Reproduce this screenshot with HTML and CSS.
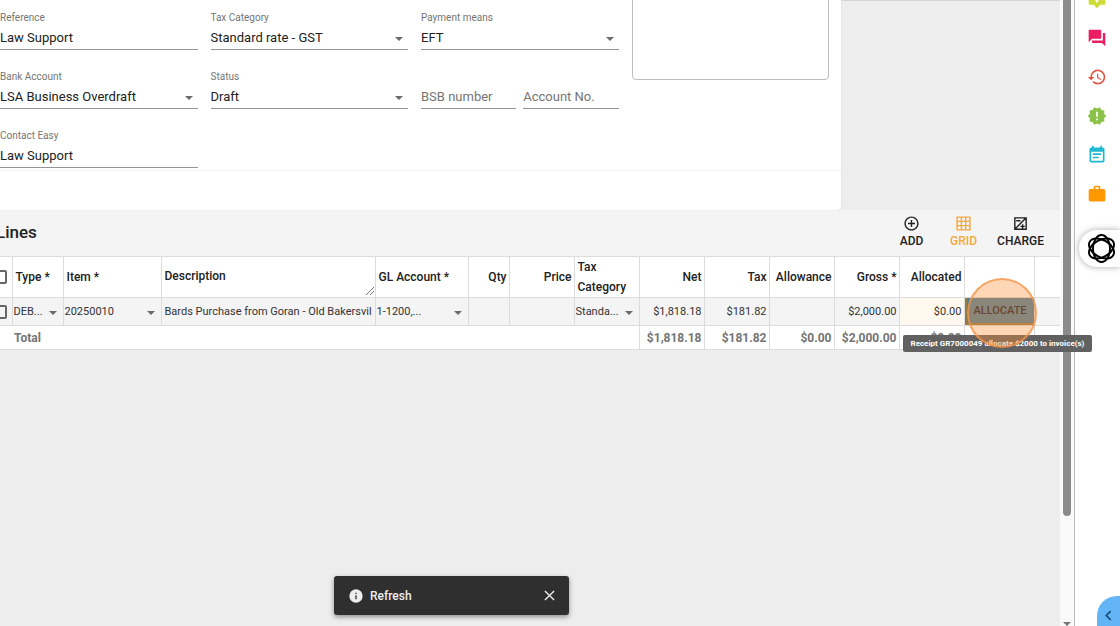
FILE: index.html
```html
<!DOCTYPE html>
<html lang="en">
<head>
<meta charset="utf-8">
<title>Purchase lines</title>
<link rel="stylesheet" href="styles.css">
</head>
<body>
<div class="app">
  <main class="main">
    <div class="top">
      <form class="card">
        <div class="fields">
          <div class="field"><label for="ref">Reference</label><input id="ref" value="Law Support"></div>
          <div class="field"><label for="taxcat">Tax Category</label><div class="pick"><select id="taxcat"><option>Standard rate - GST</option></select></div></div>
          <div class="field"><label for="pay">Payment means</label><div class="pick"><select id="pay"><option>EFT</option></select></div></div>
          <textarea class="notes" aria-label="Notes"></textarea>
          <div class="field"><label for="bank">Bank Account</label><div class="pick"><select id="bank"><option>LSA Business Overdraft</option></select></div></div>
          <div class="field"><label for="status">Status</label><div class="pick"><select id="status"><option>Draft</option></select></div></div>
          <div class="pair">
            <div class="field"><input aria-label="BSB number" placeholder="BSB number"></div>
            <div class="field"><input aria-label="Account No." placeholder="Account No."></div>
          </div>
          <div class="field"><label for="contact">Contact Easy</label><input id="contact" value="Law Support"></div>
        </div>
        <div class="card-foot"></div>
      </form>
      <div class="aside"></div>
    </div>

    <header class="lines-head">
      <h2>Lines</h2>
      <div class="tools">
        <button type="button" class="tool"><svg viewBox="0 0 24 24"><path d="M13 7h-2v4H7v2h4v4h2v-4h4v-2h-4V7zm-1-5C6.480 2 2 6.480 2 12s4.480 10 10 10 10-4.480 10-10S17.520 2 12 2zm0 18c-4.410 0-8-3.590-8-8s3.590-8 8-8 8 3.590 8 8-3.590 8-8 8z"/></svg>ADD</button>
        <button type="button" class="tool active"><svg viewBox="0 0 24 24"><path fill="none" stroke="currentColor" stroke-width="2" d="M3 3h18v18H3zM9 3v18M15 3v18M3 9h18M3 15h18"/></svg>GRID</button>
        <button type="button" class="tool"><svg viewBox="0 0 24 24"><path fill="none" stroke="currentColor" stroke-width="2" d="M4 4h16v16H4zM4 20L20 4M6 8h6M12 16h6M15 13v6"/></svg>CHARGE</button>
      </div>
    </header>

    <table class="grid">
      <colgroup><col class="c-check"><col class="c-type"><col class="c-item"><col class="c-desc"><col class="c-gl"><col class="c-qty"><col class="c-num"><col class="c-num"><col class="c-num"><col class="c-num"><col class="c-num"><col class="c-num"><col class="c-num"><col class="c-act"><col class="c-end"></colgroup>
      <thead>
        <tr>
          <th class="pickrow"><div class="check"><input type="checkbox" aria-label="Select all lines"></div></th>
          <th>Type *</th><th>Item *</th>
          <th><div class="resizable">Description<svg class="grip" viewBox="0 0 8 8"><path d="M0 8L8 0M4 8L8 4"/></svg></div></th>
          <th>GL Account *</th><th class="num">Qty</th><th class="num">Price</th><th class="two">Tax Category</th>
          <th class="num">Net</th><th class="num">Tax</th><th class="num">Allowance</th><th class="num">Gross *</th><th class="num">Allocated</th><th></th><th></th>
        </tr>
      </thead>
      <tbody>
        <tr>
          <td class="pickrow"><div class="check"><input type="checkbox" aria-label="Select line"></div></td>
          <td><div class="pick"><select aria-label="Type"><option>DEB...</option></select></div></td>
          <td><div class="pick"><select aria-label="Item"><option>20250010</option></select></div></td>
          <td class="text"><input class="desc" aria-label="Description" value="Bards Purchase from Goran - Old Bakersville"></td>
          <td><div class="pick"><select aria-label="GL Account"><option>1-1200,...</option></select></div></td>
          <td></td><td></td>
          <td><div class="pick"><select aria-label="Tax Category"><option>Standa...</option></select></div></td>
          <td class="num">$1,818.18</td><td class="num">$181.82</td><td></td><td class="num">$2,000.00</td><td class="num warm">$0.00</td>
          <td class="action"><button type="button" class="allocate">ALLOCATE</button><span class="tip" role="tooltip">Receipt GR7000049 allocate $2000 to invoice(s)</span><span class="halo"></span></td>
          <td></td>
        </tr>
      </tbody>
      <tfoot>
        <tr>
          <td></td><td class="total" colspan="7">Total</td>
          <td class="num">$1,818.18</td><td class="num">$181.82</td><td class="num">$0.00</td><td class="num">$2,000.00</td><td class="num">$0.00</td><td></td><td></td>
        </tr>
      </tfoot>
    </table>
  </main>

  <div class="scroll"><div class="thumb"></div><div class="down"></div></div>

  <nav class="rail">
    <button type="button" class="lime" aria-label="Announcements"><svg viewBox="0 0 24 24"><path d="M20 2H4c-1.100 0-2 .9-2 2v13c0 1.100.9 2 2 2h4l4 4 4-4h4c1.100 0 2-.9 2-2V4c0-1.100-.9-2-2-2zM12 17l-3-5h6z" fill-rule="evenodd"/></svg></button>
    <button type="button" class="pink" aria-label="Messages"><svg viewBox="0 0 24 24"><path d="M21 6h-2v9H6v2c0 .55.45 1 1 1h11l4 4V7c0-.55-.45-1-1-1zm-4 6V3c0-.55-.45-1-1-1H3c-.55 0-1 .45-1 1v14l4-4h10c.55 0 1-.45 1-1z"/></svg></button>
    <button type="button" class="red" aria-label="History"><svg viewBox="0 0 24 24"><path d="M13 3a9 9 0 0 0-9 9H1l3.890 3.890.07.14L9 12H6c0-3.870 3.130-7 7-7s7 3.130 7 7-3.130 7-7 7c-1.930 0-3.680-.79-4.940-2.060l-1.420 1.420A8.954 8.954 0 0 0 13 21a9 9 0 0 0 0-18zm-1 5v5l4.280 2.540.72-1.210-3.500-2.080V8H12z"/></svg></button>
    <button type="button" class="green" aria-label="Alerts"><svg viewBox="0 0 24 24"><path d="M23 12l-2.440-2.780.34-3.680-3.610-.82-1.890-3.180L12 3 8.600 1.540 6.710 4.720l-3.610.81.34 3.680L1 12l2.440 2.780-.34 3.690 3.610.82 1.890 3.180L12 21l3.400 1.460 1.890-3.180 3.610-.82-.34-3.680L23 12zm-10 5h-2v-2h2v2zm0-4h-2V7h2v6z"/></svg></button>
    <button type="button" class="cyan" aria-label="Notes"><svg viewBox="0 0 24 24"><path d="M17 10H7v2h10v-2zm2-7h-1V1h-2v2H8V1H6v2H5c-1.110 0-2 .9-2 2v14a2 2 0 0 0 2 2h14c1.100 0 2-.9 2-2V5c0-1.100-.9-2-2-2zm0 16H5V8h14v11zm-5-5H7v2h7v-2z"/></svg></button>
    <button type="button" class="orange" aria-label="Matters"><svg viewBox="0 0 24 24"><path fill-rule="evenodd" d="M20 6h-4V4c0-1.110-.89-2-2-2h-4c-1.110 0-2 .89-2 2v2H4c-1.110 0-2 .89-2 2v11c0 1.110.89 2 2 2h16c1.110 0 2-.89 2-2V8c0-1.110-.89-2-2-2zm-6 0h-4V4h4v2z"/></svg></button>
  </nav>
</div>

<button type="button" class="assistant" aria-label="Assistant"><svg viewBox="0 0 32 32"><g fill="none" stroke="#000" stroke-width="2"><ellipse cx="16" cy="16" rx="14" ry="8.800" transform="rotate(30 16 16)"/><ellipse cx="16" cy="16" rx="14" ry="8.800" transform="rotate(90 16 16)"/><ellipse cx="16" cy="16" rx="14" ry="8.800" transform="rotate(150 16 16)"/></g></svg></button>
<button type="button" class="expand" aria-label="Expand"><svg viewBox="0 0 10 10"><path d="M7 1L3 5l4 4"/></svg></button>
<div class="toast" role="status">
  <svg class="info" viewBox="0 0 24 24"><path d="M12 2a10 10 0 1 0 0 20 10 10 0 0 0 0-20zm1 15h-2v-6h2v6zm0-8h-2V7h2v2z"/></svg>
  <span>Refresh</span>
  <button type="button" aria-label="Close"><svg viewBox="0 0 12 12"><path d="M1 1l10 10M11 1L1 11"/></svg></button>
</div>
</body>
</html>
```
FILE: styles.css
```css
* { box-sizing: border-box; }
body { margin: 0; font-family: Roboto, "Liberation Sans", sans-serif; color: #212121; background: #ededed; }
button, input, select, textarea { font: inherit; color: inherit; margin: 0; padding: 0; border: 0; background: none; border-radius: 0; outline: 0; }
svg { display: block; fill: currentColor; }

.app { display: flex; height: 100vh; overflow: hidden; }
.main { flex: 1; min-width: 0; }

.top { display: flex; }
.card { flex: 1; background: #fff; border-radius: 0 0 4px 0; box-shadow: 0 0 1px #bbb; }
.aside { width: 219px; border-top: 1px solid #d4d4d4; }
.fields { display: grid; grid-template-columns: repeat(4, 1fr); column-gap: 13px; grid-auto-rows: 59px; padding-right: 12px; height: 170px; overflow: hidden; align-content: end; }
.field { display: flex; flex-direction: column; justify-content: flex-end; min-width: 0; padding-bottom: 2px; }
.field label { font-size: 10px; line-height: 14px; color: #757575; }
.field input, .field select { width: 100%; height: 25px; font-size: 13px; border-bottom: 1px solid #949494; }
.field input::placeholder { color: #757575; opacity: 1; }
.pair { display: grid; grid-template-columns: 1fr 1fr; gap: 7px; }
.notes { grid-row: span 2; height: 87px; border: 1px solid #bdbdbd; border-radius: 4px; resize: none; }
.card-foot { height: 40px; border-top: 1px solid #f3f3f3; }

.pick { position: relative; }
.pick select { appearance: none; width: 100%; display: block; }
.pick::after { content: ""; position: absolute; right: 5px; top: 50%; border: 4px solid transparent; border-top-color: #6b6b6b; border-bottom: 0; margin-top: -1px; pointer-events: none; }

.lines-head { display: flex; align-items: center; justify-content: space-between; height: 46px; background: #f4f4f4; padding: 0 16px 2px 0; }
.lines-head h2 { margin: 0 0 0 -4px; font-size: 17px; font-weight: 500; }
.tools { display: flex; gap: 15px; }
.tool { display: flex; flex-direction: column; align-items: center; gap: 1px; min-width: 37px; font-size: 12px; line-height: 16px; font-weight: 500; }
.tool svg { width: 17px; height: 17px; }
.tool.active { color: #f3a83c; }

.grid { width: 100%; table-layout: fixed; border-collapse: collapse; font-size: 12px; background: #fff; }
.c-check { width: 12px; } .c-type { width: 51px; } .c-item { width: 98px; } .c-gl { width: 93px; } .c-qty { width: 41px; }
.c-num { width: 65px; } .c-act { width: 70px; } .c-end { width: 26px; }
.grid th, .grid td { padding: 0 2px; border: 1px solid #dcdcdc; border-left: 0; text-align: left; white-space: nowrap; }
.grid th { height: 40px; font-weight: 500; padding: 0 2px 0 3px; }
.grid th.two { white-space: normal; line-height: 20px; }
.grid .num { text-align: right; }
.grid tbody td { height: 28px; background: #f4f4f4; padding: 0 1px; color: #333; font-size: 11px; }
.grid tbody td.num { padding-right: 2px; }
.grid tbody td.text { padding: 0 3px; }
.grid tbody td.warm { background: #fff8ee; }
.grid td:last-child, .grid th:last-child { border-right: 0; }
.grid th.pickrow, .grid tbody td.pickrow { padding: 0; }
.grid select { height: 25px; }
.grid .desc { display: block; width: 100%; height: 26px; }
.grid tfoot td { height: 24px; font-weight: 700; color: #757575; }
.grid tfoot td:first-child { border-right: 0; }
.check { display: flex; justify-content: flex-end; overflow: hidden; }
.check input { appearance: none; flex: none; width: 14px; height: 14px; border: 2px solid #666; border-radius: 2px; margin-right: 5px; }
.resizable { position: relative; height: 38px; line-height: 36px; }
.grip { position: absolute; right: -1px; bottom: 1px; width: 8px; height: 8px; stroke: #777; fill: none; }

.grid tbody td.action { position: relative; padding: 0; }
.allocate { display: block; width: 100%; height: 27px; background: #4a80a0; border: 1px solid #967b42; border-width: 0 0 2px 2px; color: #10202f; font-size: 11px; font-weight: 500; }
.tip { position: absolute; z-index: 2; left: -62px; top: 37px; padding: 0 8px; border-radius: 2px; background: #616161; color: #fff; font-size: 8px; line-height: 17px; font-weight: 700; }
.halo { position: absolute; z-index: 3; left: 2px; top: -20px; width: 70px; height: 70px; border-radius: 50%; border: 2px solid rgba(243, 148, 72, .75); background: rgba(255, 145, 55, .36); pointer-events: none; }

.scroll { width: 14px; background: #fafafa; display: flex; flex-direction: column; justify-content: space-between; align-items: center; }
.thumb { width: 8px; height: 516px; background: #8b8b8b; border-radius: 0 0 4px 4px; }
.down { border: 4px solid transparent; border-top-color: #777; border-bottom: 0; height: 2px; }

.rail { width: 46px; background: #fff; border-left: 1px solid #bbb; display: flex; flex-direction: column; align-items: center; gap: 19px; padding: 9px 2px 0 0; }
.rail button { width: 20px; height: 20px; flex: none; }
.rail .lime { margin-top: -20px; }
.lime { color: #cddc39; } .pink { color: #e91e63; } .red { color: #e05547; } .green { color: #8bc34a; } .cyan { color: #1fb9cf; } .orange { color: #ff9800; }

.assistant { position: absolute; z-index: 4; right: 0; top: 230px; width: 41px; height: 37px; padding-left: 7px; background: #fff; border-radius: 18px 0 0 18px; box-shadow: 0 0 6px rgba(0, 0, 0, .35); }
.assistant svg { width: 31px; height: 31px; }
.expand { position: absolute; right: 0; bottom: 0; width: 23px; height: 30px; padding-left: 6px; background: #64b5f6; border-radius: 20px 0 0 0; }
.expand svg { width: 11px; height: 11px; margin-top: 8px; fill: none; stroke: #174a78; stroke-width: 1.500; }
.toast { position: absolute; left: 334px; bottom: 11px; width: 235px; height: 39px; display: flex; align-items: center; gap: 6px; padding: 0 14px; border-radius: 3px; background: #2f2f2f; color: #eee; font-size: 12px; font-weight: 500; box-shadow: 0 2px 5px rgba(0, 0, 0, .4); }
.toast .info { width: 16px; height: 16px; }
.toast span { flex: 1; }
.toast button svg { width: 11px; height: 11px; stroke: #eee; stroke-width: 1.500; }
```
